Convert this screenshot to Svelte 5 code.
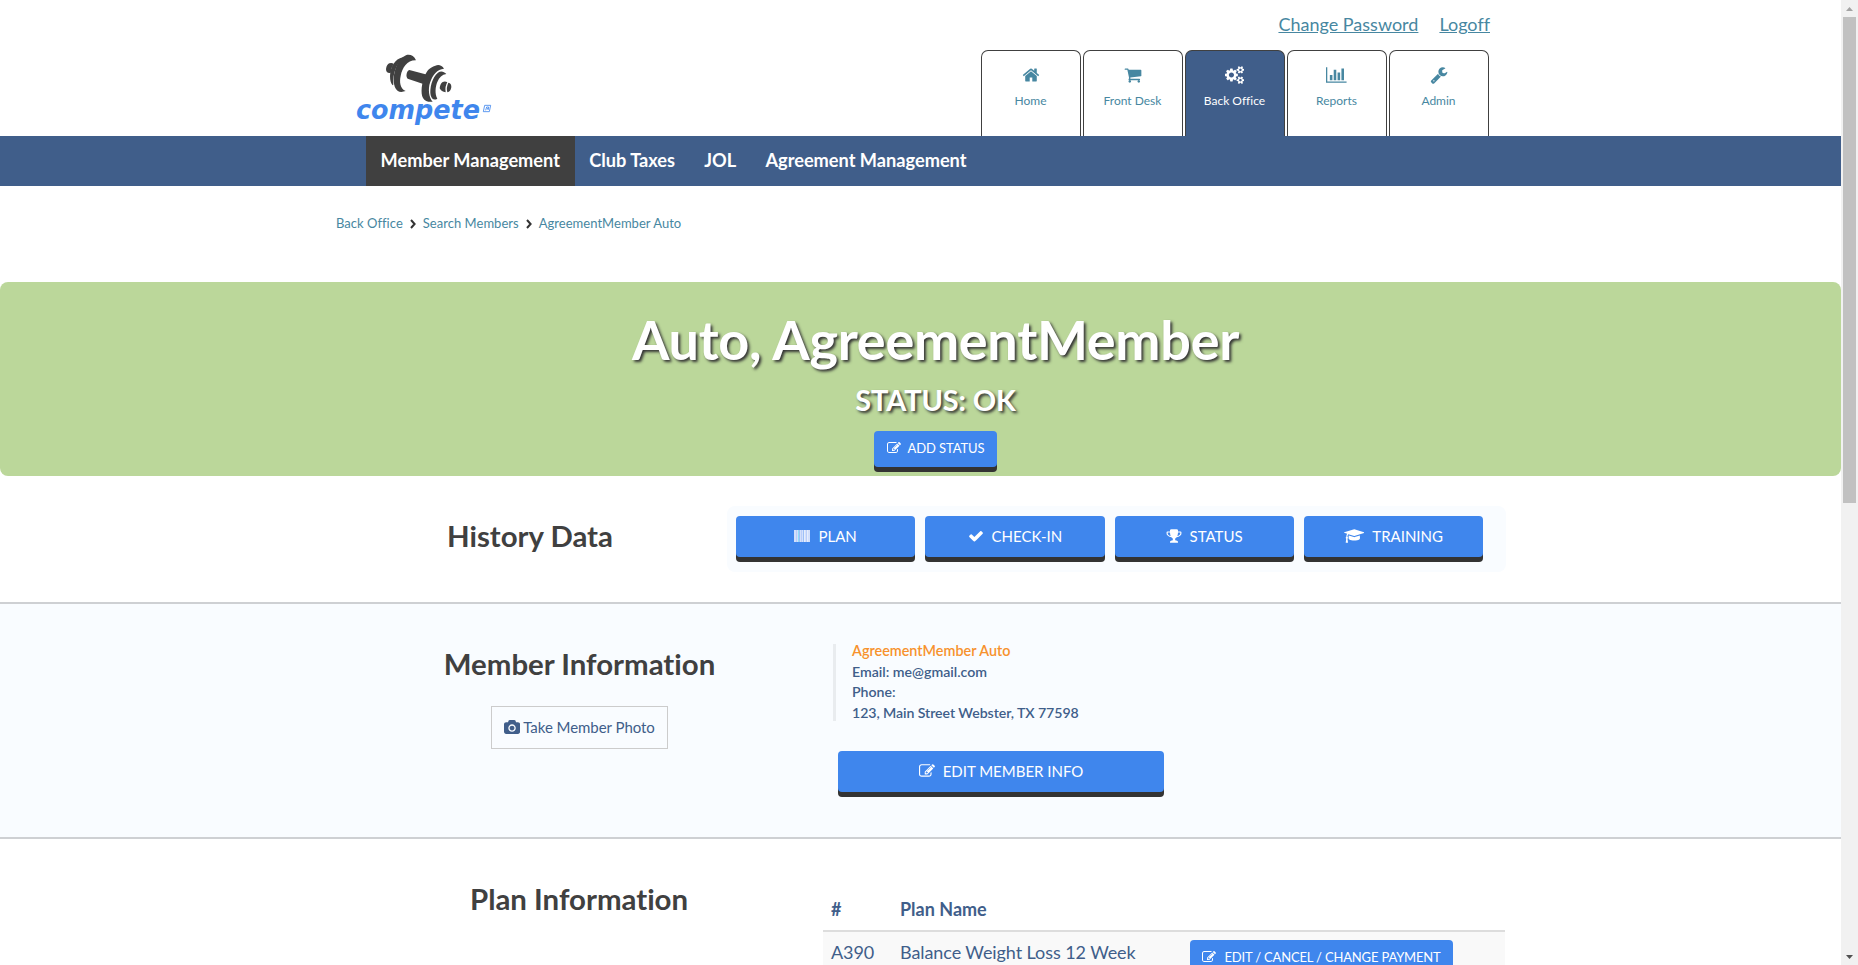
<script>
  const icons = {
    home: { w: 1792, d: 'M1472 992v480q0 26-19 45t-45 19h-384v-384h-256v384h-384q-26 0-45-19t-19-45v-480q0-1 .5-3t.5-3l575-474 575 474q1 2 1 6zm223-69l-62 74q-8 9-21 11h-3q-13 0-21-7l-692-577-692 577q-12 8-24 7-13-2-21-11l-62-74q-8-10-7-23.5t11-21.5l719-599q32-26 76-26t76 26l244 204v-195q0-14 9-23t23-9h192q14 0 23 9t9 23v408l219 182q10 8 11 21.5t-7 23.5z' },
    cart: { w: 1792, d: 'M704 1536q0 52-38 90t-90 38-90-38-38-90 38-90 90-38 90 38 38 90zm896 0q0 52-38 90t-90 38-90-38-38-90 38-90 90-38 90 38 38 90zm128-1088v512q0 24-16.5 42.5t-40.5 21.5l-1044 122q13 60 13 70 0 16-24 64h920q26 0 45 19t19 45-19 45-45 19h-1024q-26 0-45-19t-19-45q0-11 8-31.5t16-36 21.5-40 15.5-29.5l-177-823h-204q-26 0-45-19t-19-45 19-45 45-19h256q16 0 28.5 6.5t19.5 15.5 13 24.5 8 26 5.5 29.5 4.5 26h1201q26 0 45 19t19 45z' },
    cogs: { w: 1920, d: 'M896 896q0-106-75-181t-181-75-181 75-75 181 75 181 181 75 181-75 75-181zm768 512q0-52-38-90t-90-38-90 38-38 90q0 53 37.5 90.5t90.5 37.5 90.5-37.5 37.5-90.5zm0-1024q0-52-38-90t-90-38-90 38-38 90q0 53 37.5 90.5t90.5 37.5 90.5-37.5 37.5-90.5zm-384 421v185q0 10-7 19.5t-16 10.5l-155 24q-11 35-32 76 34 48 90 115 7 11 7 20 0 12-7 19-23 30-82.5 89.5t-78.5 59.5q-11 0-21-7l-115-90q-37 19-77 31-11 108-23 155-7 24-30 24h-186q-11 0-20-7.5t-10-17.5l-23-153q-34-10-75-31l-118 89q-7 7-20 7-11 0-21-8-144-133-144-160 0-9 7-19 10-14 41-53t47-61q-23-44-35-82l-152-24q-10-1-17-9.5t-7-19.5v-185q0-10 7-19.5t16-10.5l155-24q11-35 32-76-34-48-90-115-7-11-7-20 0-12 7-20 22-30 82-89t79-59q11 0 21 7l115 90q34-18 77-32 11-108 23-154 7-24 30-24h186q11 0 20 7.5t10 17.5l23 153q34 10 75 31l118-89q8-7 20-7 11 0 21 8 144 133 144 160 0 8-7 19-12 16-42 54t-45 60q23 48 34 82l152 23q10 2 17 10.5t7 19.5zm640 533v140q0 16-149 31-12 27-30 52 51 113 51 138 0 4-4 7-122 71-124 71-8 0-46-47t-52-68q-20 2-30 2t-30-2q-14 21-52 68t-46 47q-2 0-124-71-4-3-4-7 0-25 51-138-18-25-30-52-149-15-149-31v-140q0-16 149-31 13-29 30-52-51-113-51-138 0-4 4-7 4-2 35-20t59-34 30-16q8 0 46 46.5t52 67.5q20-2 30-2t30 2q51-71 92-112l6-2q4 0 124 70 4 3 4 7 0 25-51 138 17 23 30 52 149 15 149 31zm0-1024v140q0 16-149 31-12 27-30 52 51 113 51 138 0 4-4 7-122 71-124 71-8 0-46-47t-52-68q-20 2-30 2t-30-2q-14 21-52 68t-46 47q-2 0-124-71-4-3-4-7 0-25 51-138-18-25-30-52-149-15-149-31v-140q0-16 149-31 13-29 30-52-51-113-51-138 0-4 4-7 4-2 35-20t59-34 30-16q8 0 46 46.5t52 67.5q20-2 30-2t30 2q51-71 92-112l6-2q4 0 124 70 4 3 4 7 0 25-51 138 17 23 30 52 149 15 149 31z' },
    chart: { w: 2048, d: 'M640 896v512h-256v-512h256zm384-512v1024h-256v-1024h256zm1024 1152v128h-2048v-1536h128v1408h1920zm-640-896v768h-256v-768h256zm384-384v1152h-256v-1152h256z' },
    wrench: { w: 1792, d: 'M448 1472q0-26-19-45t-45-19-45 19-19 45 19 45 45 19 45-19 19-45zm644-420l-682 682q-37 37-90 37-52 0-91-37l-106-108q-38-36-38-90 0-53 38-91l681-681q39 98 114.5 173.5t173.5 114.5zm634-435q0 39-23 106-47 134-164.5 217.5t-258.5 83.5q-185 0-316.5-131.5t-131.5-316.5 131.5-316.5 316.5-131.5q58 0 121.5 16.5t107.5 46.5q16 11 16 28t-16 28l-293 169v224l193 107q5-3 79-48.5t135.5-81 70.5-35.5q15 0 23.5 10t8.5 25z' },
    edit: { w: 1792, d: 'M888 1184l116-116-152-152-116 116v56h96v96h56zm440-720q-16-16-33 1l-350 350q-17 17-1 33t33-1l350-350q17-17 1-33zm80 594v190q0 119-84.5 203.5t-203.5 84.5h-832q-119 0-203.5-84.5t-84.5-203.5v-832q0-119 84.5-203.5t203.5-84.5h832q63 0 117 25 15 7 18 23 3 17-9 29l-49 49q-14 14-32 8-23-6-45-6h-832q-66 0-113 47t-47 113v832q0 66 47 113t113 47h832q66 0 113-47t47-113v-126q0-13 9-22l64-64q15-15 35-7t20 29zm-96-738l288 288-672 672h-288v-288zm444 132l-92 92-288-288 92-92q28-28 68-28t68 28l152 152q28 28 28 68t-28 68z' },
    check: { w: 1792, d: 'M1671 566q0 40-28 68l-724 724-136 136q-28 28-68 28t-68-28l-136-136-362-362q-28-28-28-68t28-68l136-136q28-28 68-28t68 28l294 295 656-657q28-28 68-28t68 28l136 136q28 28 28 68z' },
    trophy: { w: 1792, d: 'M522 883q-74-162-74-371h-256v96q0 78 94.5 162t235.5 113zm1078-275v-96h-256q0 209-74 371 141-29 235.5-113t94.5-162zm128-128v128q0 71-41.5 143t-112 130-173 97.5-215.5 44.5q-42 54-95 95-38 34-52.5 72.5t-14.5 89.5q0 54 30.5 91t97.5 37q75 0 133.5 45.5t58.5 114.5v64q0 14-9 23t-23 9h-832q-14 0-23-9t-9-23v-64q0-69 58.5-114.5t133.5-45.5q67 0 97.5-37t30.5-91q0-51-14.5-89.5t-52.5-72.5q-53-41-95-95-113-5-215.5-44.5t-173-97.5-112-130-41.5-143v-128q0-40 28-68t68-28h288v-96q0-66 47-113t113-47h576q66 0 113 47t47 113v96h288q40 0 68 28t28 68z' },
    cap: { w: 2304, d: 'M1774 836l18 316q4 69-82 128t-235 93.5-323 34.5-323-34.5-235-93.5-82-128l18-316 574 181q22 7 48 7t48-7zm530-324q0 23-22 31l-1120 352q-4 1-10 1t-10-1l-652-206q-43 34-71 111.5t-34 178.5q63 36 63 109 0 69-58 107l58 433q2 14-8 25-9 11-24 11h-192q-15 0-24-11-10-11-8-25l58-433q-58-38-58-107 0-73 65-111 11-207 98-330l-333-104q-22-8-22-31t22-31l1120-352q4-1 10-1t10 1l1120 352q22 8 22 31z' },
    camera: { w: 1920, d: 'M960 672q119 0 203.5 84.5t84.5 203.5-84.5 203.5-203.5 84.5-203.5-84.5-84.5-203.5 84.5-203.5 203.5-84.5zm704-416q106 0 181 75t75 181v896q0 106-75 181t-181 75h-1408q-106 0-181-75t-75-181v-896q0-106 75-181t181-75h224l51-136q19-49 69.5-84.5t103.5-35.5h512q53 0 103.5 35.5t69.5 84.5l51 136h224zm-704 1152q185 0 316.5-131.5t131.5-316.5-131.5-316.5-316.5-131.5-316.5 131.5-131.5 316.5 131.5 316.5 316.5 131.5z' }
  };
  const tabs = [
    ['Home', 'home'],
    ['Front Desk', 'cart'],
    ['Back Office', 'cogs'],
    ['Reports', 'chart'],
    ['Admin', 'wrench']
  ];
  const nav = ['Member Management', 'Club Taxes', 'JOL', 'Agreement Management'];
  const crumbs = ['Back Office', 'Search Members', 'AgreementMember Auto'];
  const history = [
    ['PLAN', 'barcode'],
    ['CHECK-IN', 'check'],
    ['STATUS', 'trophy'],
    ['TRAINING', 'cap']
  ];
</script>

{#snippet icon(name, size)}
  {#if name === 'barcode'}
    <svg class="icon" width="16" height="12" viewBox="0 0 16 12">
      <rect width="16" height="12" fill="#d3e0fb" />
      <path fill="#b9cdfa" d="M2 0h1v12h-1zM7 0h1v12h-1zM12 0h1v12h-1z" />
      <path fill="#8fdcf7" d="M4 0h1v12h-1z" />
      <path fill="#9cc0f8" d="M5 0h1v12h-1zM9 0h1v12h-1z" />
      <path fill="#e6eefd" d="M10 0h1v12h-1zM13 0h1v12h-1z" />
    </svg>
  {:else}
    <svg class="icon" width={(size * icons[name].w) / 1792} height={size} viewBox="0 0 {icons[name].w} 1792">
      <path fill="currentColor" d={icons[name].d} />
    </svg>
  {/if}
{/snippet}

<div class="window">
  <div class="page">
    <header>
      <svg class="logo" width="170" height="96" viewBox="0 0 510 288">
        <g fill="#404040">
          <path d="M148 70q9-2 13 2-9 13-9 27-14 2-14-12 2-14 10-17z" />
          <path d="M188 52C165 57 151 80 150 108c0 14 3 22 8 28l2-2C158 100 168 72 191 53z" />
          <path d="M228 61C222 46 208 42 198 46c-22 8-37 44-37 72 0 22 7 38 23 38l13-3c-17-7-19-27-15-45 5-26 20-48 46-47z" />
          <path d="M208 90l54 14-12 28-47-16c-7-6-3-24 5-26z" />
          <path d="M312 86c-6-10-16-13-26-9-18 6-25 15-31 29-10 22-14 54-6 68 5 10 19 13 29 11-12-13-14-39-8-57 8-24 22-40 42-42z" />
          <path d="M319 102c-7-8-17-10-25-4-18 14-26 48-22 68 3 12 11 16 20 10-8-14-6-36 0-50 6-14 14-22 27-24z" />
          <path d="M308 126q8-3 14 1-8 13-5 30-13-2-18-12 1-14 9-19z" />
          <path d="M325 128q10 2 9 14-2 14-12 15-4-14 3-29z" />
        </g>
        <text x="48" y="236" textLength="372" lengthAdjust="spacingAndGlyphs" class="wordmark">compete</text>
        <g fill="none" stroke="#3f86ed" stroke-width="2.5">
          <path d="M434 196h18l-4 19h-18z" />
          <path d="M437 211l3-10h6l-2 9M441 206h4" />
        </g>
      </svg>
      <div class="right">
        <div class="links"><a href="#top">Change Password</a><a href="#top">Logoff</a></div>
        <div class="tabs">
          {#each tabs as [label, name]}
            <div class="tab" class:on={label === 'Back Office'}>
              <div class="glyph">{@render icon(name, 18)}</div>
              {label}
            </div>
          {/each}
        </div>
      </div>
    </header>

    <nav>
      {#each nav as item, i}<div class="item" class:on={i === 0}>{item}</div>{/each}
    </nav>

    <div class="crumbs">
      {#each crumbs as c, i}
        {#if i}<svg width="6" height="10" viewBox="0 0 6 10"><path d="M1 1l3.6 4L1 9" fill="none" stroke="#333" stroke-width="2" /></svg>{/if}
        <span>{c}</span>
      {/each}
    </div>

    <section class="banner">
      <h1>Auto, AgreementMember</h1>
      <h3>STATUS: OK</h3>
      <div class="btn small">{@render icon('edit', 14)}ADD STATUS</div>
    </section>

    <section class="history">
      <h2>History Data</h2>
      <div class="panel">
        {#each history as [label, name]}
          <div class="btn">{@render icon(name, 16)}{label}</div>
        {/each}
      </div>
    </section>

    <section class="member">
      <div class="left">
        <h2>Member Information</h2>
        <div class="photo">{@render icon('camera', 15)}Take Member Photo</div>
      </div>
      <div class="info">
        <div class="quote">
          <div class="name">AgreementMember Auto</div>
          <div>Email: me@gmail.com</div>
          <div>Phone:</div>
          <div class="address">123, Main Street Webster, TX 77598</div>
        </div>
        <div class="btn wide">{@render icon('edit', 16)}EDIT MEMBER INFO</div>
      </div>
    </section>

    <section class="plan">
      <h2>Plan Information</h2>
      <div class="table">
        <div class="row head"><div>#</div><div>Plan Name</div></div>
        <div class="row body">
          <div>A390</div>
          <div>Balance Weight Loss 12 Week</div>
          <div class="btn pay">{@render icon('edit', 14)}EDIT / CANCEL / CHANGE PAYMENT</div>
        </div>
      </div>
    </section>
  </div>

  <aside class="scroll">
    <svg width="7" height="4" viewBox="0 0 7 4"><path d="M0 4L3.5 0L7 4z" fill="#a3a3a3" /></svg>
    <div class="thumb"></div>
    <svg class="down" width="7" height="4" viewBox="0 0 7 4"><path d="M0 0h7L3.500 4z" fill="#505050" /></svg>
  </aside>
</div>

<style>
  :global(body) { background: #fff; overflow: hidden; }
  .window { display: flex; width: 1858px; height: 965px; overflow: hidden; font-family: Lato, sans-serif; font-variant-ligatures: none; color: #405e8a; white-space: nowrap; }
  .window * { box-sizing: border-box; }
  .page { width: 1841px; height: 965px; overflow: hidden; }
  .icon { display: block; flex: none; }
  h1, h2, h3 { margin: 0; font-weight: 700; }

  header { height: 136px; display: flex; justify-content: space-between; padding: 0 350px 0 340px; }
  .logo { margin-top: 40px; }
  .wordmark { font: italic 700 82px "DejaVu Sans", sans-serif; fill: #3f86ed; }
  .right { display: flex; flex-direction: column; align-items: flex-end; }
  .links { height: 50px; display: flex; gap: 21px; font-size: 18px; line-height: 22px; padding: 13px 1px 0 0; }
  .links a { color: #4787a1; text-decoration: underline; }
  .tabs { display: flex; gap: 2px; margin-right: 2px; }
  .tab { width: 100px; height: 86px; border: 1px solid #404040; border-bottom: 0; border-radius: 7px 7px 0 0; color: #4787a1; font-size: 12px; line-height: 16px; text-align: center; padding: 15px 1px 0 0; }
  .tab.on { background: #405e8a; color: #fff; }
  .glyph { height: 27px; display: flex; justify-content: center; }

  nav { height: 50px; background: #405e8a; display: flex; padding-left: 366px; }
  .item { padding: 0 14.6px; font-size: 18.200px; font-weight: 700; line-height: 49px; color: #fff; }
  .item.on { background: #404040; }

  .crumbs { height: 96px; padding: 29px 0 0 336px; display: flex; align-items: flex-start; gap: 7px; font-size: 13px; letter-spacing: 0.030px; line-height: 16px; color: #4787a1; }
  .crumbs svg { margin-top: 4px; }

  .banner { height: 194px; background: #bbd79a; border-radius: 8px; padding: 26px 0 0 30px; display: flex; flex-direction: column; align-items: center; color: #fff; }
  h1 { font-size: 54px; line-height: 64px; letter-spacing: -0.3px; text-shadow: 2px 2px 3px #333; }
  h3 { font-size: 29px; line-height: 36px; letter-spacing: -0.150px; margin-top: 10px; text-shadow: 2px 2px 3px #333; }
  .btn { display: flex; align-items: center; justify-content: center; gap: 8px; height: 41px; background: #3f86ed; border-radius: 4px; box-shadow: 0 5px 0 #333; color: #fff; font-size: 15px; padding-bottom: 2px; }
  .btn.small { width: 123px; height: 36px; font-size: 13px; margin-top: 13px; gap: 7px; letter-spacing: -0.1px; }

  .history { height: 126px; display: flex; padding: 30px 335px 0 447px; justify-content: space-between; }
  h2 { font-size: 29.400px; line-height: 36px; color: #404040; }
  .history h2 { padding-top: 12px; }
  .panel { width: 779px; height: 66px; border-radius: 8px; background: #f9fcff; padding: 10px 23px 0 9px; display: grid; grid-template-columns: repeat(4, 1fr); gap: 10px; }

  .member { height: 237px; background: #f9fcff; border: solid #ced0d3; border-width: 2px 0; display: flex; }
  .left { width: 833px; padding: 42px 0 0 326px; display: flex; flex-direction: column; align-items: center; }
  .photo { width: 177px; height: 43px; margin-top: 24px; padding-bottom: 1px; border: 1px solid #ccc; display: flex; align-items: center; justify-content: center; gap: 3px; font-size: 15px; letter-spacing: -0.050px; }
  .info { padding-top: 40px; }
  .quote { display: flow-root; height: 77px; border-left: 3px solid #e9ecef; padding-left: 16px; font-size: 14.150px; line-height: 20.570px; font-weight: 600; }
  .name { color: #f7922d; font-size: 14.400px; margin-top: -3px; }
  .address { letter-spacing: -0.070px; }
  .btn.wide { width: 326px; margin: 30px 0 0 5px; }

  .plan { display: flex; padding-left: 470px; }
  .plan h2 { width: 353px; padding-top: 42px; }
  .table { width: 682px; padding-top: 50px; font-size: 18px; }
  .row { display: grid; grid-template-columns: 69px 290px 263px; padding-left: 8px; }
  .head { height: 43px; font-weight: 700; line-height: 41px; border-bottom: 2px solid #ddd; }
  .body { background: #f9f9f9; line-height: 41px; height: 60px; letter-spacing: -0.080px; }
  .btn.pay { height: 36px; margin-top: 8px; font-size: 13px; line-height: 18px; letter-spacing: -0.170px; }

  .scroll { width: 17px; height: 965px; background: #f1f1f1; display: flex; flex-direction: column; align-items: center; padding: 7px 0 6px; }
  .thumb { width: 13px; height: 486px; margin-top: 6px; background: #c1c1c1; }
  .down { margin-top: auto; }
</style>
